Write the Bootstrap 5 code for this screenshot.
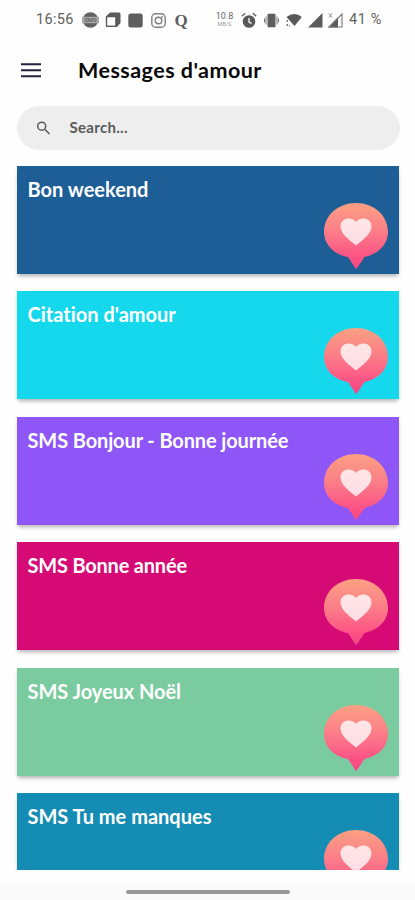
<!DOCTYPE html>
<html lang="fr">
<head>
<meta charset="utf-8">
<meta name="viewport" content="width=device-width, initial-scale=1">
<title>Messages d'amour</title>
<link href="https://cdn.jsdelivr.net/npm/bootstrap@5.3.0/dist/css/bootstrap.min.css" rel="stylesheet">
<style>
body{font-family:Lato,"Open Sans",sans-serif;font-variant-ligatures:none;background:#fefefe;overflow:hidden}
.screen{height:900px}
.status{height:40px;padding:0 33px 0 36px;color:#606060;font:400 14.5px/40px Roboto,sans-serif}
.status svg{display:block;flex:none}
.clock{width:38px;letter-spacing:.35px;white-space:nowrap}
.rate{font-size:9px;line-height:10px;width:19px;color:#666;text-align:center;margin-top:-1px}
.rate small{display:block;font-size:5.5px;line-height:7px;color:#999}
.pct{letter-spacing:.6px;white-space:nowrap;padding-left:6px}
.topbar{height:66px;padding:0 21px}
.topbar h1{font-size:21.5px;font-weight:700;color:#080808;margin-left:37px;letter-spacing:.46px}
.searchbox{height:44px;margin:0 15.5px 0 16.5px;padding-left:19.5px;background:#eee;color:#5a5a5a;font-size:15px;font-weight:700;letter-spacing:.3px}
.searchbox span{margin-left:18.5px;padding-bottom:2px}
.list-area{height:720px;padding:15.5px 16px 0 16.5px;overflow:hidden}
.category{height:108px;margin-bottom:17.5px;padding:9px 11px;box-shadow:0 3px 4px -1px rgba(0,0,0,.3);flex:none;color:#fff}
.category h2{font-size:20px;font-weight:700;line-height:28px;margin:0;white-space:nowrap}
.category svg{flex:none;margin-top:28px}
.c1{background:#1c5e95}.c2{background:#15d8ec}.c3{background:#8e55f7}.c4{background:#d60a75}.c5{background:#7acb9f}.c6{background:#158cb3}
.c3 h2{letter-spacing:-.12px}.c4 h2{letter-spacing:-.2px}.c5 h2{letter-spacing:-.05px}
.homebar{height:16px;margin-top:14px;background:#fafafa}
.homebar div{width:164px;height:4px;background:#999}
</style>
<script src="https://cdn.jsdelivr.net/npm/bootstrap@5.3.0/dist/js/bootstrap.bundle.min.js"></script>
</head>
<body>
<svg width="0" height="0" class="position-absolute">
<defs>
<linearGradient id="pinFill" x1="0" y1="0" x2="0" y2="1"><stop offset="0" stop-color="#fca083"/><stop offset=".45" stop-color="#fb7c88"/><stop offset=".85" stop-color="#fd4f85"/><stop offset="1" stop-color="#ee4a84"/></linearGradient>
<linearGradient id="heartFill" x1="0" y1="0" x2="0" y2="1"><stop offset="0" stop-color="#ffe6e6"/><stop offset="1" stop-color="#ffdce6"/></linearGradient>
</defs>
<symbol id="pin" viewBox="0 0 64 66">
<path fill="url(#pinFill)" d="M32 0C50 0 64 12.500 64 29C64 41 55 51 40.500 54L33 65.200Q32.200 66.200 31.400 65.200L24 54C9.500 51.500 0 41.500 0 29C0 12.500 14 0 32 0Z"/>
<path fill="url(#heartFill)" d="M32 42.500C26 37.500 16.500 31 16.500 23.500C16.500 18.500 20 15.500 24.500 15.500C28 15.500 30.500 17 32 19C33.500 17 36 15.500 39.500 15.500C44 15.500 47.500 18.500 47.500 23.500C47.500 31 38 37.500 32 42.500Z"/>
</symbol>
</svg>
<div class="screen d-flex flex-column">
<header>
<div class="status d-flex align-items-center">
<span class="clock">16:56</span>
<svg class="ms-2" width="17" height="16" viewBox="0 0 17 16"><circle cx="8.500" cy="8" r="7.800" fill="#626262"/><path d="M0 4.800h17v6.400H0z" fill="#aaa"/><text x="8.500" y="10.200" text-anchor="middle" font-size="6" font-weight="700" fill="#666">SMS</text></svg>
<svg style="margin-left:6px" width="16" height="16" viewBox="0 0 16 16"><path d="M5 .5h9q1.500 0 1.500 1.500v9l-3.500 4H2q-1.200 0-1.200-1.200V4.500z" fill="#5b5b5b"/><path d="M2.200 5.300h8v8.300h-8z" fill="#fff"/></svg>
<svg style="margin-left:7px" width="15" height="15" viewBox="0 0 15 15"><rect x=".3" y=".5" width="14.400" height="14" rx="2.500" fill="#5e5e5e"/></svg>
<svg style="margin-left:8px" width="15" height="15" viewBox="0 0 15 15" fill="none" stroke="#808080" stroke-width="1.400"><rect x=".8" y=".8" width="13.400" height="13.400" rx="3.800"/><circle cx="7.500" cy="7.500" r="3.300"/><circle cx="11.200" cy="3.800" r=".3"/></svg>
<svg style="margin-left:6px" width="18" height="24" viewBox="0 0 18 24"><text x="9" y="17.500" text-anchor="middle" font-family="Liberation Serif,serif" font-weight="700" font-size="17" fill="#5e5e5e">Q</text></svg>
<div class="rate" style="margin-left:25px">10.8<small>MB/S</small></div>
<svg style="margin-left:7px" width="16" height="17" viewBox="0 0 16 17"><circle cx="8" cy="9.500" r="6.300" fill="#585858"/><path d="M.8 4.200l3.400-3M15.200 4.200l-3.400-3" stroke="#666" stroke-width="1.500"/><path d="M8 6v4l2.600 1.500" fill="none" stroke="#fff" stroke-width="1.300"/></svg>
<svg style="margin-left:7px" width="15" height="15" viewBox="0 0 15 15"><rect x="3.500" y=".8" width="8" height="13.400" rx="1" fill="#5e5e5e"/><path d="M2 3.500v8M13 3.500v8M.5 5.500v4M14.500 5.500v4" stroke="#777" stroke-width="1"/></svg>
<svg style="margin-left:7px" width="16" height="15" viewBox="0 0 16 15"><path d="M.5 4Q8.500-2 15.800 4L8.500 13z" fill="#595959"/><path d="M1.300 7v2M1.300 11v2M3.500 12.500v1" stroke="#777" stroke-width="1.400"/></svg>
<svg style="margin-left:6px" width="15" height="15" viewBox="0 0 15 15"><path d="M14.500 0v14.500H0z" fill="#5c5c5c"/></svg>
<svg style="margin-left:4px" width="16" height="15" viewBox="0 0 16 15"><path d="M11 4v10.500H1z" fill="#5c5c5c"/><path d="M15 1v13H2z" fill="none" stroke="#777" stroke-width="1.100"/><path d="M2 .5l3 4M5 .5l-3 4" stroke="#888"/></svg>
<span class="pct">41 %</span>
</div>
<div class="topbar d-flex align-items-center">
<svg width="20" height="16" viewBox="0 0 20 16" style="margin-top:-6px"><path d="M0 2.200h20M0 8.200h20M0 14.200h20" stroke="#25213f" stroke-width="2"/></svg>
<h1 class="mb-0" style="padding-bottom:5px">Messages d'amour</h1>
</div>
<div class="searchbox rounded-pill d-flex align-items-center">
<svg width="15" height="15" viewBox="0 0 15 15" fill="none" stroke="#5a5a5a" stroke-width="1.500"><circle cx="5.700" cy="5.200" r="4"/><path d="M8.800 8.300l4.700 4.700"/></svg>
<span>Search...</span>
</div>
</header>
<main class="list-area d-flex flex-column">
<section class="category c1 d-flex justify-content-between"><h2>Bon weekend</h2><svg width="64" height="66"><use href="#pin"/></svg></section>
<section class="category c2 d-flex justify-content-between"><h2>Citation d'amour</h2><svg width="64" height="66"><use href="#pin"/></svg></section>
<section class="category c3 d-flex justify-content-between"><h2>SMS Bonjour - Bonne journée</h2><svg width="64" height="66"><use href="#pin"/></svg></section>
<section class="category c4 d-flex justify-content-between"><h2>SMS Bonne année</h2><svg width="64" height="66"><use href="#pin"/></svg></section>
<section class="category c5 d-flex justify-content-between"><h2>SMS Joyeux Noël</h2><svg width="64" height="66"><use href="#pin"/></svg></section>
<section class="category c6 d-flex justify-content-between"><h2>SMS Tu me manques</h2><svg width="64" height="66"><use href="#pin"/></svg></section>
</main>
<footer class="homebar d-flex justify-content-center align-items-center"><div class="rounded-pill"></div></footer>
</div>
</body>
</html>
